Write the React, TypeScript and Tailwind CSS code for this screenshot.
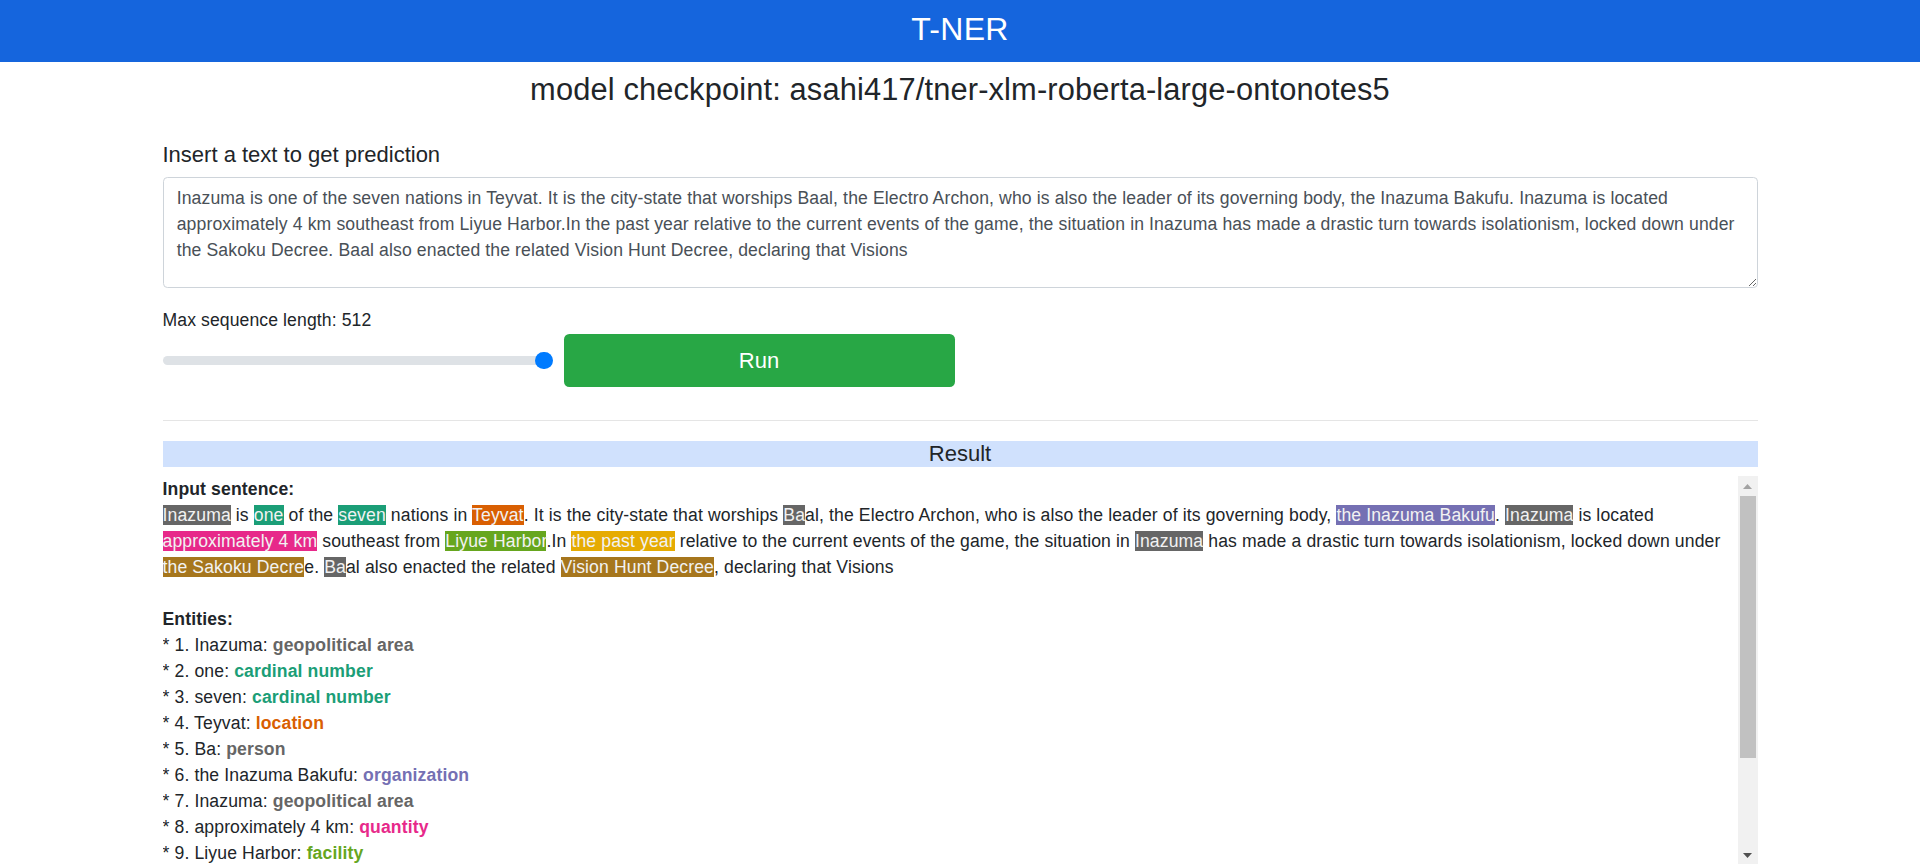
import React from "react";

type Seg = { text: string; color?: string };

const INPUT_TEXT =
  "Inazuma is one of the seven nations in Teyvat. It is the city-state that worships Baal, the Electro Archon, who is also the leader of its governing body, the Inazuma Bakufu. Inazuma is located approximately 4 km southeast from Liyue Harbor.In the past year relative to the current events of the game, the situation in Inazuma has made a drastic turn towards isolationism, locked down under the Sakoku Decree. Baal also enacted the related Vision Hunt Decree, declaring that Visions";

const C = {
  gpe: "#666666",
  cardinal: "#1b9e77",
  location: "#d95f02",
  person: "#666666",
  org: "#7570b3",
  quantity: "#e7298a",
  facility: "#66a61e",
  date: "#e6ab02",
  law: "#a6761d",
};

const segments: Seg[] = [
  { text: "Inazuma", color: C.gpe },
  { text: " is " },
  { text: "one", color: C.cardinal },
  { text: " of the " },
  { text: "seven", color: C.cardinal },
  { text: " nations in " },
  { text: "Teyvat", color: C.location },
  { text: ". It is the city-state that worships " },
  { text: "Ba", color: C.person },
  { text: "al, the Electro Archon, who is also the leader of its governing body, " },
  { text: "the Inazuma Bakufu", color: C.org },
  { text: ". " },
  { text: "Inazuma", color: C.gpe },
  { text: " is located " },
  { text: "approximately 4 km", color: C.quantity },
  { text: " southeast from " },
  { text: "Liyue Harbor", color: C.facility },
  { text: ".In " },
  { text: "the past year", color: C.date },
  { text: " relative to the current events of the game, the situation in " },
  { text: "Inazuma", color: C.gpe },
  { text: " has made a drastic turn towards isolationism, locked down under " },
  { text: "the Sakoku Decre", color: C.law },
  { text: "e. " },
  { text: "Ba", color: C.person },
  { text: "al also enacted the related " },
  { text: "Vision Hunt Decree", color: C.law },
  { text: ", declaring that Visions" },
];

const entities: Array<{ name: string; label: string; color: string }> = [
  { name: "Inazuma", label: "geopolitical area", color: C.gpe },
  { name: "one", label: "cardinal number", color: C.cardinal },
  { name: "seven", label: "cardinal number", color: C.cardinal },
  { name: "Teyvat", label: "location", color: C.location },
  { name: "Ba", label: "person", color: C.person },
  { name: "the Inazuma Bakufu", label: "organization", color: C.org },
  { name: "Inazuma", label: "geopolitical area", color: C.gpe },
  { name: "approximately 4 km", label: "quantity", color: C.quantity },
  { name: "Liyue Harbor", label: "facility", color: C.facility },
  { name: "the past year", label: "date", color: C.date },
  { name: "Inazuma", label: "geopolitical area", color: C.gpe },
  { name: "the Sakoku Decre", label: "law", color: C.law },
  { name: "Ba", label: "person", color: C.person },
  { name: "Vision Hunt Decree", label: "law", color: C.law },
];

function ScrollBar() {
  return (
    <div className="flex w-[20px] shrink-0 flex-col bg-[#f1f1f1]">
      <div className="flex h-[20px] items-center justify-center">
        <svg width="9" height="5" viewBox="0 0 9 5">
          <polygon points="0,5 4.5,0 9,5" fill="#a3a3a3" />
        </svg>
      </div>
      <div className="mx-[2px] h-[262px] bg-[#c1c1c1]" />
      <div className="flex-1" />
      <div className="flex h-[20px] items-center justify-center">
        <svg width="9" height="5" viewBox="0 0 9 5">
          <polygon points="0,0 9,0 4.5,5" fill="#505050" />
        </svg>
      </div>
    </div>
  );
}

export default function App() {
  return (
    <div className="h-[864px] overflow-hidden bg-white font-['Liberation_Sans',Arial,sans-serif] text-[#212529]">
      <header className="flex h-[62px] items-center justify-center bg-[#1565dd] pb-[4px]">
        <h1 className="text-[32px] leading-[38px] tracking-[0.3px] text-white">T-NER</h1>
      </header>

      <div className="mx-auto w-[1595px]">
        <h3 className="mt-[9px] text-center text-[30.8px] leading-[37px] tracking-[0.15px]">
          model checkpoint: asahi417/tner-xlm-roberta-large-ontonotes5
        </h3>

        <h5 className="mt-[34px] mb-[9px] text-[22px] leading-[26.4px]">
          Insert a text to get prediction
        </h5>
        <textarea
          readOnly
          defaultValue={INPUT_TEXT}
          className="block h-[111px] w-full rounded-[4.4px] border border-[#ced4da] px-[13.2px] py-[7px] text-[17.6px] leading-[26px] tracking-[0.12px] text-[#495057] outline-none"
        />

        <p className="mt-[19px] text-[17.6px] leading-[26.4px] tracking-[0.1px]">Max sequence length: 512</p>
        <div className="flex items-center gap-[11px]">
          <input
            type="range"
            min={1}
            max={512}
            defaultValue={512}
            className="h-[9px] w-[390px] cursor-pointer appearance-none rounded-full bg-[#dee2e6] outline-none [&::-webkit-slider-thumb]:h-[17.6px] [&::-webkit-slider-thumb]:w-[17.6px] [&::-webkit-slider-thumb]:appearance-none [&::-webkit-slider-thumb]:rounded-full [&::-webkit-slider-thumb]:bg-[#007bff]"
          />
          <button
            type="button"
            className="h-[53px] w-[391px] rounded-[5.3px] bg-[#28a745] text-[22px] leading-[33px] text-white"
          >
            Run
          </button>
        </div>

        <hr className="mt-[33.5px] mb-[19.5px] border-t border-[#e5e5e5]" />

        <h5 className="mb-[9px] bg-[#d0e1fd] text-center text-[22px] leading-[26.4px]">Result</h5>

        <div className="flex h-[389px]">
          <div className="min-w-0 flex-1 overflow-hidden text-[17.6px] leading-[26px] tracking-[0.12px]">
            <p className="font-bold">Input sentence:</p>
            <p>
              {segments.map((s, i) =>
                s.color ? (
                  <span key={i} className="text-[#f2f2f2]" style={{ backgroundColor: s.color }}>
                    {s.text}
                  </span>
                ) : (
                  <span key={i}>{s.text}</span>
                )
              )}
            </p>
            <p className="h-[26px]" />
            <p className="font-bold">Entities:</p>
            {entities.map((e, i) => (
              <p key={i}>
                * {i + 1}. {e.name}:{" "}
                <span className="font-bold" style={{ color: e.color }}>
                  {e.label}
                </span>
              </p>
            ))}
          </div>
          <ScrollBar />
        </div>
      </div>
    </div>
  );
}
